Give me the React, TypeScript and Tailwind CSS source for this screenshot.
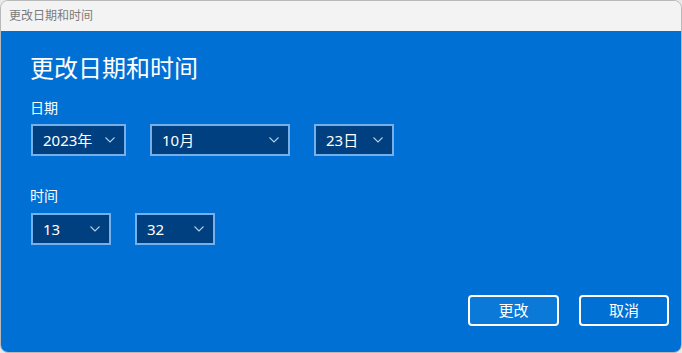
import React from "react";

const font = { fontFamily: '"Noto Sans", "Noto Sans CJK SC", sans-serif' };

const Chevron: React.FC = () => (
  <svg width="10" height="6" viewBox="0 0 10 6" className="shrink-0">
    <path d="M0.5 0.5 L5 5 L9.5 0.5" fill="none" stroke="#b5cde6" strokeWidth="1.1" />
  </svg>
);

interface SelectProps {
  value: string;
  width: string;
}

const Select: React.FC<SelectProps> = ({ value, width }) => (
  <div
    className={`${width} h-[32px] flex items-center justify-between pl-[10px] pr-[9px] border-2 border-[#75b0ea] bg-[#003f80] text-white text-[15px]`}
  >
    <span className="leading-none">{value}</span>
    <Chevron />
  </div>
);

export default function App() {
  return (
    <div className="w-[682px] h-[353px] bg-[#e9e9e9]" style={font}>
      <div className="w-full h-full flex flex-col rounded-[8px] border border-[#b9b9b9] overflow-hidden">
        <div className="h-[30px] shrink-0 bg-[#f3f3f3] flex items-center pl-[8px] text-[12px] text-[#7b7b7b]">
          更改日期和时间
        </div>
        <div className="flex-1 bg-[#0170d5] flex flex-col pl-[29px] pr-[12px] pt-[21px]">
          <h1 className="text-[24px] leading-[32px] text-white font-normal">更改日期和时间</h1>

          <div className="mt-[14px] text-[14px] leading-[20px] text-white">日期</div>
          <div className="mt-[6px] flex gap-[24px] pl-[1px]">
            <Select value="2023年" width="w-[95px]" />
            <Select value="10月" width="w-[140px]" />
            <Select value="23日" width="w-[80px]" />
          </div>

          <div className="mt-[30px] text-[14px] leading-[20px] text-white">时间</div>
          <div className="mt-[7px] flex gap-[24px] pl-[1px]">
            <Select value="13" width="w-[80px]" />
            <Select value="32" width="w-[80px]" />
          </div>

          <div className="mt-[50px] flex justify-end gap-[20px]">
            <button className="w-[91px] h-[31px] rounded-[4px] border-2 border-white bg-[#0b79d8] text-white text-[15px]">
              更改
            </button>
            <button className="w-[90px] h-[31px] rounded-[4px] border-2 border-white bg-[#0170d5] text-white text-[15px]">
              取消
            </button>
          </div>
        </div>
      </div>
    </div>
  );
}
